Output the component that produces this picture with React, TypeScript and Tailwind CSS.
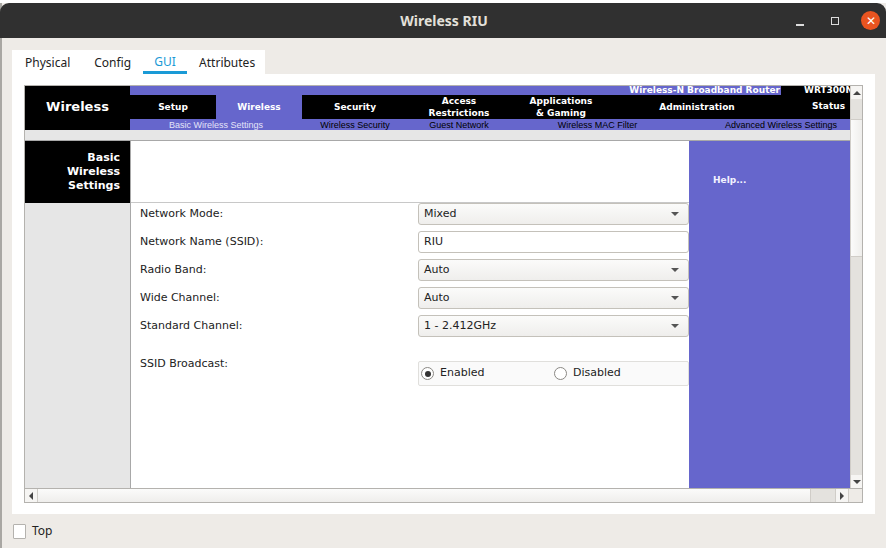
const dejavu = { fontFamily: '"DejaVu Sans", Verdana, sans-serif' };
const arial = { fontFamily: '"Liberation Sans", Arial, sans-serif' };
const noto = { fontFamily: '"Noto Sans", "Open Sans", sans-serif' };

const navItems = [
  { label: 'Setup', w: 'w-[86px]', active: false },
  { label: 'Wireless', w: 'w-[86px]', active: true },
  { label: 'Security', w: 'w-[106px]', active: false },
  { label: 'Access\nRestrictions', w: 'w-[102px]', active: false },
  { label: 'Applications\n& Gaming', w: 'w-[102px]', active: false },
  { label: 'Administration', w: 'w-[170px]', active: false },
];

const subLinks = [
  { label: 'Basic Wireless Settings', w: 'w-[172px]', active: true },
  { label: 'Wireless Security', w: 'w-[106px]', active: false },
  { label: 'Guest Network', w: 'w-[102px]', active: false },
  { label: 'Wireless MAC Filter', w: 'w-[175px]', active: false },
];

const rows = [
  { label: 'Network Mode:', value: 'Mixed', select: true },
  { label: 'Network Name (SSID):', value: 'RIU', select: false },
  { label: 'Radio Band:', value: 'Auto', select: true },
  { label: 'Wide Channel:', value: 'Auto', select: true },
  { label: 'Standard Channel:', value: '1 - 2.412GHz', select: true },
];

function Field({ value, select }: { value: string; select: boolean }) {
  return (
    <div
      className={`w-[271px] h-[22px] rounded-[3px] border border-[#c4c1ba] flex items-center pl-[5px] pr-[9px] text-[11px] text-[#222] ${
        select ? 'bg-gradient-to-b from-[#fbfbfa] to-[#efeeec]' : 'bg-white'
      }`}
    >
      <span className="flex-1">{value}</span>
      {select && (
        <span className="w-0 h-0 border-l-[4px] border-r-[4px] border-t-[4px] border-l-transparent border-r-transparent border-t-[#555]" />
      )}
    </div>
  );
}

function Radio({ checked, label }: { checked: boolean; label: string }) {
  return (
    <div className="flex items-center gap-[6px]">
      <span className="w-[13px] h-[13px] rounded-full border border-[#8a8884] bg-white flex items-center justify-center">
        {checked && <span className="w-[6px] h-[6px] rounded-full bg-[#333]" />}
      </span>
      <span className="text-[11px] text-[#222]">{label}</span>
    </div>
  );
}

export default function App() {
  return (
    <div className="w-[886px] h-[548px] bg-white overflow-hidden">
      <div className="mt-[3px] h-[545px] bg-[#eeebe7] border-l-2 border-[#a9a7a3] flex flex-col" style={noto}>
        {/* title bar */}
        <div className="h-[35px] bg-[#303030] rounded-t-[9px] flex items-center relative -ml-[2px]">
          <div className="flex-1 text-center text-[14px] font-bold text-[#e3e0da] pl-[2px]">Wireless RIU</div>
          <div className="absolute right-[6px] top-[8px] flex items-center">
            <span className="w-[8px] h-[2px] bg-[#dcdcdc] mt-[8px] mr-[27px]" />
            <span className="w-[8px] h-[8px] border border-[#dcdcdc] mr-[22px]" />
            <span className="w-[19px] h-[19px] rounded-full bg-[#e95420] text-white text-[12px] leading-[19px] text-center">✕</span>
          </div>
        </div>

        <div className="pl-[10px] pt-[12px]">
          {/* tabs */}
          <div className="w-[253px] h-[24px] bg-white flex items-end text-[12px] text-[#222]">
            <div className="pl-[13px] pr-[12px] h-full flex items-center pt-[2px]">Physical</div>
            <div className="px-[12px] h-full flex items-center pt-[2px]">Config</div>
            <div className="w-[44px] h-full flex flex-col items-center">
              <div className="flex-1 flex items-center pt-[3px] text-[#1a9ad6]">GUI</div>
              <div className="w-[44px] h-[4px] bg-[#1a9ad6]" />
            </div>
            <div className="pl-[12px] h-full flex items-center pt-[2px]">Attributes</div>
          </div>

          {/* panel */}
          <div className="w-[863px] h-[440px] bg-white pt-[11px] pl-[12px]">
            <div className="w-[839px] h-[418px] border border-[#b4b2ae] flex flex-col">
              <div className="flex h-[402px]">
                {/* web page */}
                <div className="w-[825px] h-[402px] flex flex-col overflow-hidden" style={dejavu}>
                  <div className="flex h-[44px]">
                    <div className="w-[105px] shrink-0 bg-black text-white text-[13px] font-bold flex items-center justify-center pb-[3px]">Wireless</div>
                    <div className="w-[720px] shrink-0 flex flex-col bg-[#6666cc]">
                      <div className="h-[9px] flex">
                        <div className="w-[651px] shrink-0 text-right pr-[1px] text-[9px] leading-[8px] font-bold text-white overflow-hidden whitespace-nowrap">Wireless-N Broadband Router</div>
                        <div className="w-[69px] shrink-0 bg-black text-[9px] leading-[8px] font-bold text-white pl-[23px] whitespace-nowrap overflow-hidden">WRT300N</div>
                      </div>
                      <div className="h-[24px] flex">
                        {navItems.map((n) => (
                          <div
                            key={n.label}
                            className={`${n.w} shrink-0 flex items-center justify-center text-center text-[9px] leading-[12px] font-bold text-white whitespace-pre ${n.active ? 'bg-[#6666cc]' : 'bg-black'}`}
                          >
                            {n.label}
                          </div>
                        ))}
                        <div className="flex-1 bg-black flex items-center justify-end pr-[5px] text-[9px] font-bold text-white">Status</div>
                      </div>
                      <div className="h-[11px] flex text-[9px] leading-[12px]" style={arial}>
                        {subLinks.map((s) => (
                          <div key={s.label} className={`${s.w} shrink-0 text-center ${s.active ? 'text-[#e4e4f8]' : 'text-black'}`}>
                            {s.label}
                          </div>
                        ))}
                        <div className="flex-1 text-right pr-[13px] text-black whitespace-nowrap">Advanced Wireless Settings</div>
                      </div>
                    </div>
                  </div>
                  <div className="h-[10px] bg-[#e6e6e6] border-b border-[#a8a8a8] box-content" />

                  <div className="flex flex-1">
                    <div className="w-[105px] shrink-0 flex flex-col bg-[#e6e6e6]">
                      <div className="h-[62px] bg-black text-white text-[11px] leading-[14px] font-bold text-right pr-[10px] pt-[10px]">
                        Basic
                        <br />
                        Wireless
                        <br />
                        Settings
                      </div>
                    </div>
                    <div className="w-[559px] shrink-0 bg-white flex flex-col border-l border-[#a8a8a8]">
                      <div className="h-[62px] border-b border-[#c8c8c8]" />
                      <div className="flex flex-col gap-[6px] pl-[9px] text-[11px] text-[#222]">
                        {rows.map((r) => (
                          <div key={r.label} className="flex items-center justify-between h-[22px]">
                            <span>{r.label}</span>
                            <Field value={r.value} select={r.select} />
                          </div>
                        ))}
                        <div className="flex justify-between mt-[12px]">
                          <span className="pt-[1px]">SSID Broadcast:</span>
                          <div className="w-[271px] h-[25px] mt-[6px] border border-[#e0dfdc] bg-[#fafafa] rounded-[2px] flex items-center pl-[2px]">
                            <div className="w-[133px]">
                              <Radio checked label="Enabled" />
                            </div>
                            <Radio checked={false} label="Disabled" />
                          </div>
                        </div>
                      </div>
                    </div>
                    <div className="flex-1 bg-[#6666cc] pl-[24px] pt-[33px] text-[9px] font-bold text-[#f2f2ff]">Help...</div>
                  </div>
                </div>

                {/* vertical scrollbar */}
                <div className="w-[12px] flex flex-col bg-[#e4e2de] border-l border-[#d0cdc8]">
                  <div className="h-[13px] bg-[#f6f5f3] flex items-center justify-center">
                    <span className="w-0 h-0 border-l-[4px] border-r-[4px] border-b-[4px] border-l-transparent border-r-transparent border-b-[#444]" />
                  </div>
                  <div className="h-[20px]" />
                  <div className="h-[138px] bg-gradient-to-r from-[#fbfbfa] to-[#efeeec] border-y border-[#d0cdc8]" />
                  <div className="flex-1" />
                  <div className="h-[13px] bg-[#f6f5f3] flex items-center justify-center">
                    <span className="w-0 h-0 border-l-[4px] border-r-[4px] border-t-[4px] border-l-transparent border-r-transparent border-t-[#444]" />
                  </div>
                </div>
              </div>

              {/* horizontal scrollbar */}
              <div className="flex h-[14px] border-t border-[#b4b2ae] bg-[#e4e2de]">
                <div className="w-[13px] bg-[#f6f5f3] flex items-center justify-center border-r border-[#d0cdc8]">
                  <span className="w-0 h-0 border-t-[4px] border-b-[4px] border-r-[4px] border-t-transparent border-b-transparent border-r-[#444]" />
                </div>
                <div className="w-[773px] bg-gradient-to-b from-[#fbfbfa] to-[#efeeec] border-r border-[#d0cdc8]" />
                <div className="w-[24px]" />
                <div className="w-[14px] bg-[#f6f5f3] flex items-center justify-center border-x border-[#d0cdc8]">
                  <span className="w-0 h-0 border-t-[4px] border-b-[4px] border-l-[4px] border-t-transparent border-b-transparent border-l-[#444]" />
                </div>
                <div className="flex-1 bg-[#eeebe7]" />
              </div>
            </div>
          </div>

          {/* bottom */}
          <div className="flex items-center gap-[6px] mt-[8px] ml-[1px]">
            <span className="w-[13px] h-[15px] bg-white border border-[#b4b2ae] rounded-[1px]" />
            <span className="text-[12px] text-[#222]">Top</span>
          </div>
        </div>
      </div>
    </div>
  );
}
